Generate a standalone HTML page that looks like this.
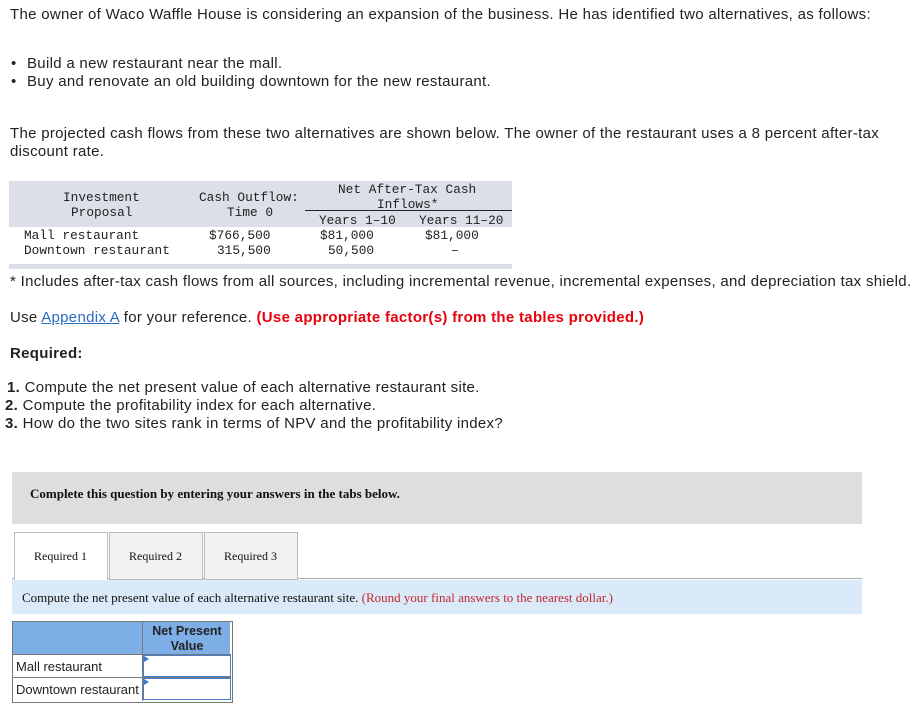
<!DOCTYPE html>
<html><head><meta charset="utf-8"><style>
body{margin:0;width:921px;height:710px;background:#fff;position:relative;font-family:"Liberation Sans",Arial,sans-serif;color:#222;overflow:hidden}
.t{position:absolute;white-space:nowrap;font-size:15px;line-height:18px;letter-spacing:0.3px}
.m{position:absolute;white-space:nowrap;font-family:"Liberation Mono",monospace;font-size:12.8px;line-height:15px;color:#222}
.s{font-family:"Liberation Serif",serif;letter-spacing:0}
</style></head><body>
<div class="t" style="left:10px;top:6px">The owner of Waco Waffle House is considering an expansion of the business. He has identified two alternatives, as follows:</div>
<div class="t" style="left:11px;top:55px">•</div><div class="t" style="left:27px;top:55px">Build a new restaurant near the mall.</div>
<div class="t" style="left:11px;top:73px">•</div><div class="t" style="left:27px;top:73px">Buy and renovate an old building downtown for the new restaurant.</div>
<div class="t" style="left:10px;top:125px">The projected cash flows from these two alternatives are shown below. The owner of the restaurant uses a 8 percent after-tax</div>
<div class="t" style="left:10px;top:143px">discount rate.</div>

<div style="position:absolute;left:9px;top:181px;width:503px;height:46px;background:#dcdfe8"></div>
<div style="position:absolute;left:305px;top:210px;width:207px;height:1px;background:#222"></div>
<div style="position:absolute;left:9px;top:264px;width:503px;height:5px;background:#dcdfe8"></div>
<div class="m" style="left:63px;top:190px">Investment</div>
<div class="m" style="left:71px;top:205px">Proposal</div>
<div class="m" style="left:199px;top:190px">Cash Outflow:</div>
<div class="m" style="left:227px;top:205px">Time 0</div>
<div class="m" style="left:338px;top:182px">Net After-Tax Cash</div>
<div class="m" style="left:377px;top:197px">Inflows*</div>
<div class="m" style="left:319px;top:213px">Years 1–10</div>
<div class="m" style="left:419px;top:213px">Years 11–20</div>
<div class="m" style="left:24px;top:228px">Mall restaurant</div>
<div class="m" style="left:24px;top:243px">Downtown restaurant</div>
<div class="m" style="left:209px;top:228px">$766,500</div>
<div class="m" style="left:217px;top:243px">315,500</div>
<div class="m" style="left:320px;top:228px">$81,000</div>
<div class="m" style="left:328px;top:243px">50,500</div>
<div class="m" style="left:425px;top:228px">$81,000</div>
<div class="m" style="left:451px;top:243px">–</div>

<div class="t" style="left:10px;top:273px">* Includes after-tax cash flows from all sources, including incremental revenue, incremental expenses, and depreciation tax shield.</div>
<div class="t" style="left:10px;top:309px">Use <span style="color:#2a6bc4;text-decoration:underline">Appendix A</span> for your reference. <b style="color:#e8000b">(Use appropriate factor(s) from the tables provided.)</b></div>
<div class="t" style="left:10px;top:345px"><b>Required:</b></div>
<div class="t" style="left:7px;top:379px"><b>1.</b> Compute the net present value of each alternative restaurant site.</div>
<div class="t" style="left:5px;top:397px"><b>2.</b> Compute the profitability index for each alternative.</div>
<div class="t" style="left:5px;top:415px"><b>3.</b> How do the two sites rank in terms of NPV and the profitability index?</div>

<div style="position:absolute;left:12px;top:472px;width:850px;height:52px;background:#dedede"></div>
<div class="t s" style="left:30px;top:485px;font-size:13px;font-weight:bold;color:#111">Complete this question by entering your answers in the tabs below.</div>

<div style="position:absolute;left:12px;top:578px;width:850px;height:1px;background:#aaa"></div>
<div style="position:absolute;left:14px;top:532px;width:92px;height:47px;background:#fff;border:1px solid #bbb;border-bottom:none"></div>
<div style="position:absolute;left:109px;top:532px;width:92px;height:46px;background:#f2f2f2;border:1px solid #bbb"></div>
<div style="position:absolute;left:204px;top:532px;width:92px;height:46px;background:#f2f2f2;border:1px solid #bbb"></div>
<div class="t s" style="left:34px;top:547px;font-size:12px;color:#111">Required 1</div>
<div class="t s" style="left:129px;top:547px;font-size:12px;color:#111">Required 2</div>
<div class="t s" style="left:224px;top:547px;font-size:12px;color:#111">Required 3</div>

<div style="position:absolute;left:12px;top:580px;width:850px;height:34px;background:#dbeaf8"></div>
<div class="t s" style="left:22px;top:589px;font-size:13px;color:#111">Compute the net present value of each alternative restaurant site. <span style="color:#c0282f">(Round your final answers to the nearest dollar.)</span></div>

<div style="position:absolute;left:12px;top:621px;width:219px;height:80px;border:1px solid #777;background:#fff"></div>
<div style="position:absolute;left:13px;top:622px;width:217px;height:32px;background:#7eaee6"></div>
<div style="position:absolute;left:142px;top:622px;width:1px;height:79px;background:#777"></div>
<div style="position:absolute;left:13px;top:654px;width:218px;height:1px;background:#777"></div>
<div style="position:absolute;left:13px;top:677px;width:218px;height:1px;background:#777"></div>
<div style="position:absolute;left:143px;top:655px;width:86px;height:20px;border:1px solid #4a7fc8"></div>
<div style="position:absolute;left:143px;top:678px;width:86px;height:20px;border:1px solid #4a7fc8"></div>
<div style="position:absolute;left:144px;top:656px;width:0;height:0;border-top:3px solid transparent;border-bottom:3px solid transparent;border-left:5px solid #3a7ad0"></div>
<div style="position:absolute;left:144px;top:679px;width:0;height:0;border-top:3px solid transparent;border-bottom:3px solid transparent;border-left:5px solid #3a7ad0"></div>
<div class="t" style="left:143px;top:624px;width:88px;text-align:center;font-size:12.5px;line-height:15px;font-weight:bold;color:#222;letter-spacing:0">Net Present<br>Value</div>
<div class="t" style="left:16px;top:658px;font-size:13px;letter-spacing:0">Mall restaurant</div>
<div class="t" style="left:16px;top:681px;font-size:13px;letter-spacing:0">Downtown restaurant</div>
</body></html>
